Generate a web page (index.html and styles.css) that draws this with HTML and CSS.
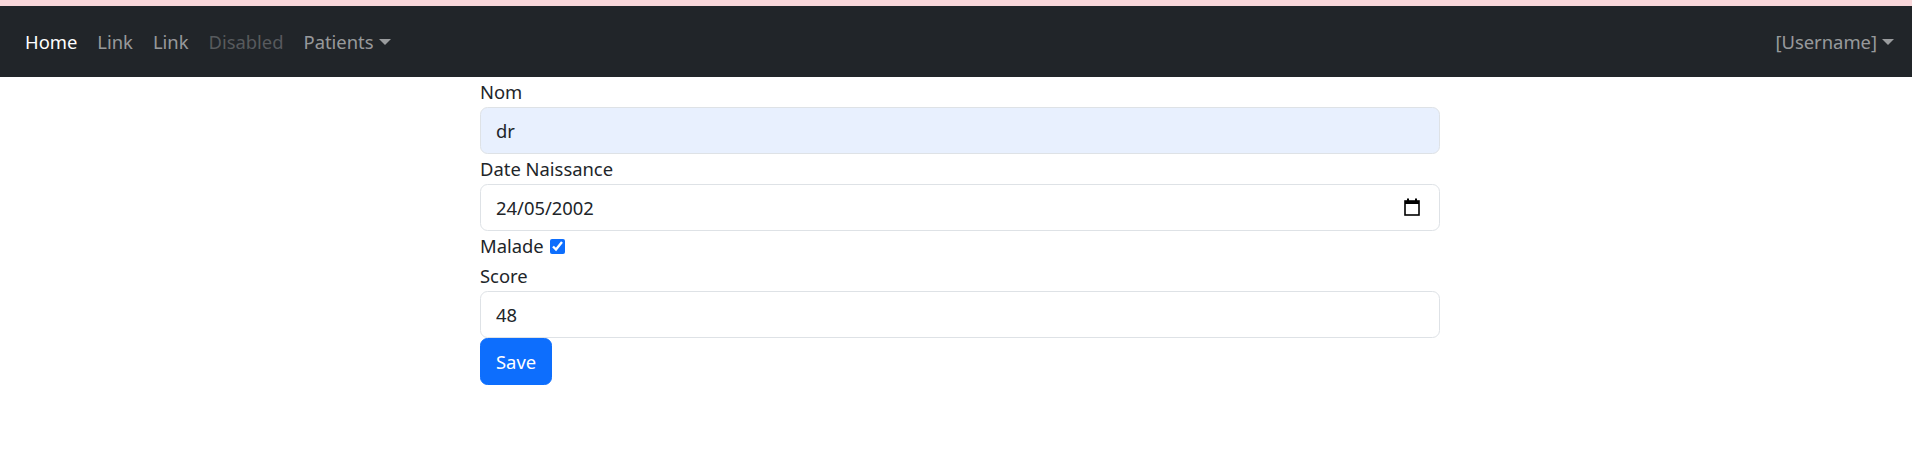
FILE: index.html
```html
<!DOCTYPE html>
<html lang="fr">
<head>
<meta charset="utf-8">
<title>Patients</title>
<link rel="stylesheet" href="styles.css">
</head>
<body>
<div class="alert-strip"></div>
<nav class="navbar">
  <ul class="nav">
    <li><a class="nav-link active" href="#">Home</a></li>
    <li><a class="nav-link" href="#">Link</a></li>
    <li><a class="nav-link" href="#">Link</a></li>
    <li><a class="nav-link disabled" href="#">Disabled</a></li>
    <li><a class="nav-link dropdown-toggle" href="#">Patients</a></li>
  </ul>
  <ul class="nav nav-right">
    <li><a class="nav-link dropdown-toggle" href="#">[Username]</a></li>
  </ul>
</nav>
<main class="content">
  <form class="patient-form">
    <label class="form-label" for="nom">Nom</label>
    <input class="form-control autofilled" id="nom" type="text" value="dr">
    <label class="form-label" for="date">Date Naissance</label>
    <div class="date-wrap">
      <input class="form-control" id="date" type="text" value="24/05/2002">
      <svg class="cal-icon" width="16" height="18" viewBox="0 0 16 18">
        <rect x="1" y="3" width="14" height="14" fill="none" stroke="#000" stroke-width="1.6"/>
        <rect x="1" y="3" width="14" height="3" fill="#000"/>
        <rect x="3" y="0.5" width="2" height="3.5" fill="#000"/>
        <rect x="11" y="0.5" width="2" height="3.5" fill="#000"/>
      </svg>
    </div>
    <div class="check-row">
      <label for="malade">Malade</label><input class="check" id="malade" type="checkbox" checked>
    </div>
    <label class="form-label" for="score">Score</label>
    <input class="form-control" id="score" type="text" value="48">
    <button class="btn-primary" type="button">Save</button>
  </form>
</main>
</body>
</html>
```
FILE: styles.css
```css
* { box-sizing: border-box; }
html, body { margin: 0; padding: 0; }
body {
  font-family: "Noto Sans", "Open Sans", sans-serif;
  font-size: 18.4px;
  line-height: 30px;
  color: #212529;
  background: #fff;
}
.alert-strip { height: 6px; background: #f8d7da; }
.navbar {
  height: 71px;
  background: #212529;
  display: flex;
  align-items: center;
  justify-content: space-between;
  padding: 0 15px;
}
.nav { list-style: none; margin: 0; padding: 0; display: flex; }
.nav-link {
  display: block;
  padding: 0 10px;
  color: rgba(255,255,255,0.55);
  text-decoration: none;
}
.nav-link.active { color: #fff; }
.nav-link.disabled { color: rgba(255,255,255,0.25); }
.dropdown-toggle::after {
  content: "";
  display: inline-block;
  margin-left: 5px;
  vertical-align: 4px;
  border-top: 6px solid;
  border-left: 6px solid transparent;
  border-right: 6px solid transparent;
}
.nav-right .nav-link { padding-right: 3px; }
.content { padding-left: 480px; }
.patient-form { width: 960px; display: flex; flex-direction: column; align-items: flex-start; }
.form-label { display: block; }
.form-control {
  display: block;
  width: 960px;
  height: 47px;
  padding: 0 15px;
  font: inherit;
  color: #212529;
  background: #fff;
  border: 1px solid #dee2e6;
  border-radius: 7.5px;
}
.form-control.autofilled { background: #e8f0fe; }
.date-wrap { position: relative; }
.cal-icon { position: absolute; right: 20px; top: 14px; }
.check-row { display: flex; align-items: center; height: 30px; }
.check { width: 15px; height: 15px; margin: 0 0 0 6px; accent-color: #0d6efd; }
.btn-primary {
  height: 47px;
  padding: 0 15px;
  font: inherit;
  color: #fff;
  background: #0d6efd;
  border: 1px solid #0d6efd;
  border-radius: 7.5px;
}
```
